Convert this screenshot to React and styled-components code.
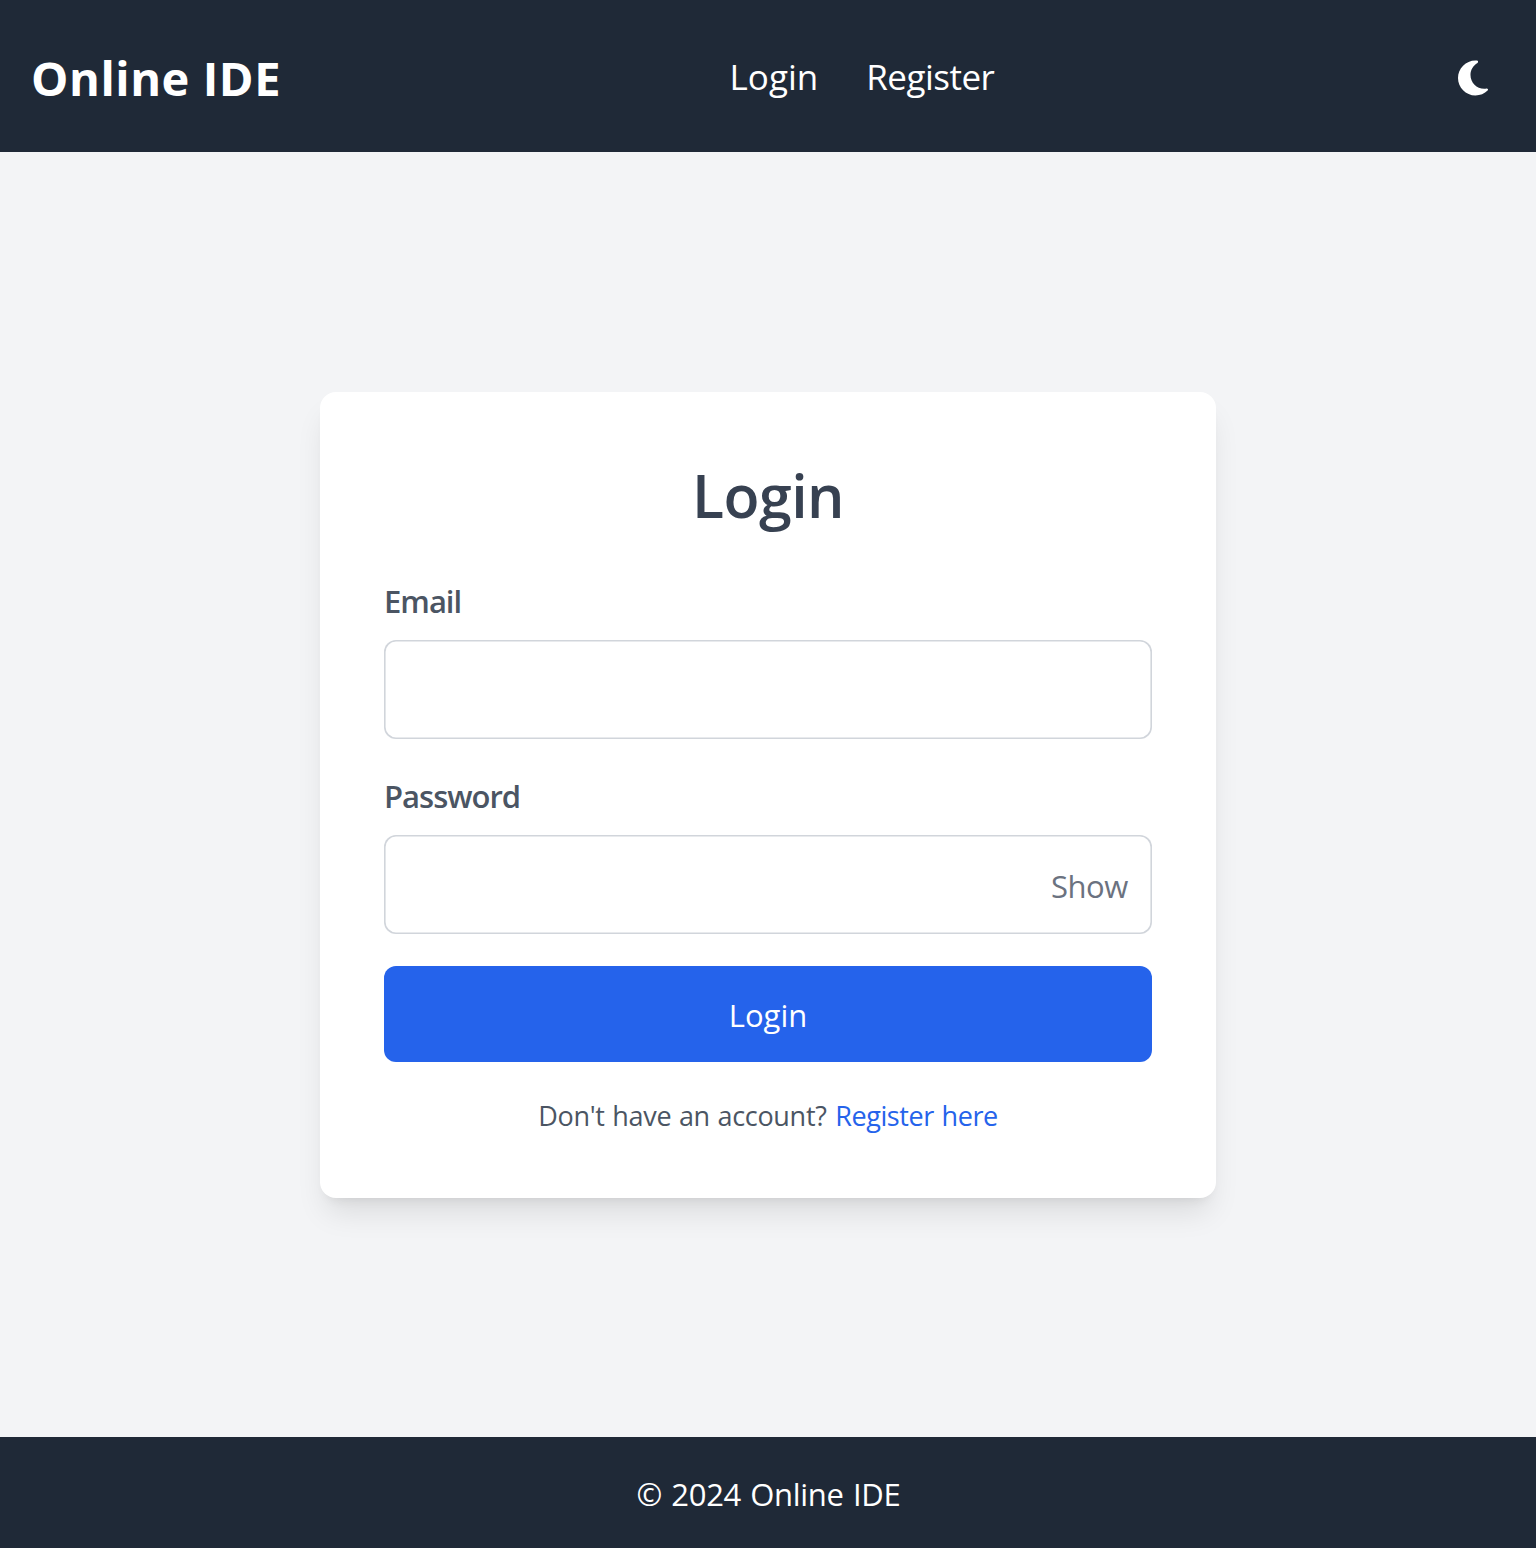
import React, { useState } from "react";
import styled, { createGlobalStyle } from "styled-components";
import { FaMoon } from "react-icons/fa6";

const GlobalStyle = createGlobalStyle`
  *, *::before, *::after { box-sizing: border-box; }
  body {
    margin: 0;
    background: #f3f4f6;
    font-family: "Segoe UI", "Open Sans", "Noto Sans", sans-serif;
    font-size: 32px;
    line-height: 48px;
  }
  h1, h2, p { margin: 0; }
  a { color: inherit; text-decoration: none; }
  button { font: inherit; border: 0; cursor: pointer; }
`;

const Page = styled.div`
  display: flex;
  flex-direction: column;
  height: 1548px;
  overflow: hidden;
`;

const Header = styled.header`
  display: flex;
  align-items: center;
  justify-content: space-between;
  height: 152px;
  padding: 3px 31px 0 32px;
  background: #1f2937;
  color: #fff;
`;

const Brand = styled.h1`
  width: 260px;
  margin: 1px 0 0 -1px;
  font-size: 47px;
  line-height: 64px;
  font-weight: 700;
  letter-spacing: 0.55px;
  white-space: nowrap;
`;

const Nav = styled.nav`
  display: flex;
  gap: 48px;
  margin: -2px 0 0 -8px;
  font-size: 35px;
  line-height: 56px;
`;

const NavLink = styled.a`
  letter-spacing: ${(p) => p.$tracking};
`;

const ThemeToggle = styled.button`
  display: flex;
  padding: 12px;
  background: none;
  color: #fff;
  font-size: 40px;
`;

const Main = styled.main`
  flex: 1;
  display: flex;
  align-items: center;
  justify-content: center;
  padding-top: 1px;
`;

const Card = styled.section`
  width: 896px;
  height: 806.4px;
  padding: 64px;
  border-radius: 16px;
  background: #fff;
  box-shadow: 0 20px 30px -6px rgba(0, 0, 0, 0.1), 0 8px 12px -8px rgba(0, 0, 0, 0.1);
`;

const Title = styled.h2`
  height: 72px;
  margin-bottom: 48px;
  padding-top: 3px;
  font-size: 59px;
  line-height: 72px;
  font-weight: 600;
  letter-spacing: -0.5px;
  text-align: center;
  color: #374151;
`;

const Field = styled.div`
  margin-bottom: 32px;
`;

const Label = styled.label`
  display: block;
  height: 48px;
  margin-bottom: 16px;
  padding-top: 1px;
  font-size: 31px;
  font-weight: 600;
  letter-spacing: -1px;
  color: #4b5563;
`;

const InputBox = styled.div`
  display: flex;
  align-items: center;
  height: 99.2px;
  padding: 0 24px;
  border-radius: 12px;
  background: #fff;
  box-shadow: inset 0 0 0 1.6px #d1d5db;
`;

const Input = styled.input`
  flex: 1;
  min-width: 0;
  border: 0;
  outline: 0;
  background: none;
  font: inherit;
`;

const ShowButton = styled.button`
  padding: 3px 0 0;
  background: none;
  font-size: 31px;
  letter-spacing: -0.4px;
  color: #6b7280;
`;

const SubmitButton = styled.button`
  display: block;
  width: 100%;
  height: 96px;
  padding: 2px 0 0;
  border-radius: 12px;
  background: #2563eb;
  color: #fff;
  font-size: 31px;
`;

const Hint = styled.p`
  margin-top: 33px;
  font-size: 27px;
  line-height: 42px;
  letter-spacing: -0.3px;
  word-spacing: 0.9px;
  text-align: center;
  color: #4b5563;
`;

const HintLink = styled.a`
  && { color: #2563eb; }
  margin-left: 1px;
  letter-spacing: -0.4px;
`;

const Footer = styled.footer`
  height: 111.4px;
  padding: 33.4px 0 0 1px;
  background: #1f2937;
  color: #fff;
  font-size: 31px;
  letter-spacing: -0.3px;
  word-spacing: 1.5px;
  text-align: center;
`;

export default function App() {
  const [visible, setVisible] = useState(false);
  return (
    <>
      <GlobalStyle />
      <Page>
        <Header>
          <Brand>Online IDE</Brand>
          <Nav>
            <NavLink $tracking="0" href="#login">Login</NavLink>
            <NavLink $tracking="-0.5px" href="#register">Register</NavLink>
          </Nav>
          <ThemeToggle aria-label="Toggle theme">
            <FaMoon />
          </ThemeToggle>
        </Header>
        <Main>
          <Card>
            <Title>Login</Title>
            <Field>
              <Label htmlFor="email">Email</Label>
              <InputBox>
                <Input id="email" type="email" />
              </InputBox>
            </Field>
            <Field>
              <Label htmlFor="password">Password</Label>
              <InputBox>
                <Input id="password" type={visible ? "text" : "password"} />
                <ShowButton onClick={() => setVisible(!visible)}>
                  {visible ? "Hide" : "Show"}
                </ShowButton>
              </InputBox>
            </Field>
            <SubmitButton>Login</SubmitButton>
            <Hint>
              Don't have an account? <HintLink href="#register">Register here</HintLink>
            </Hint>
          </Card>
        </Main>
        <Footer>© 2024 Online IDE</Footer>
      </Page>
    </>
  );
}
